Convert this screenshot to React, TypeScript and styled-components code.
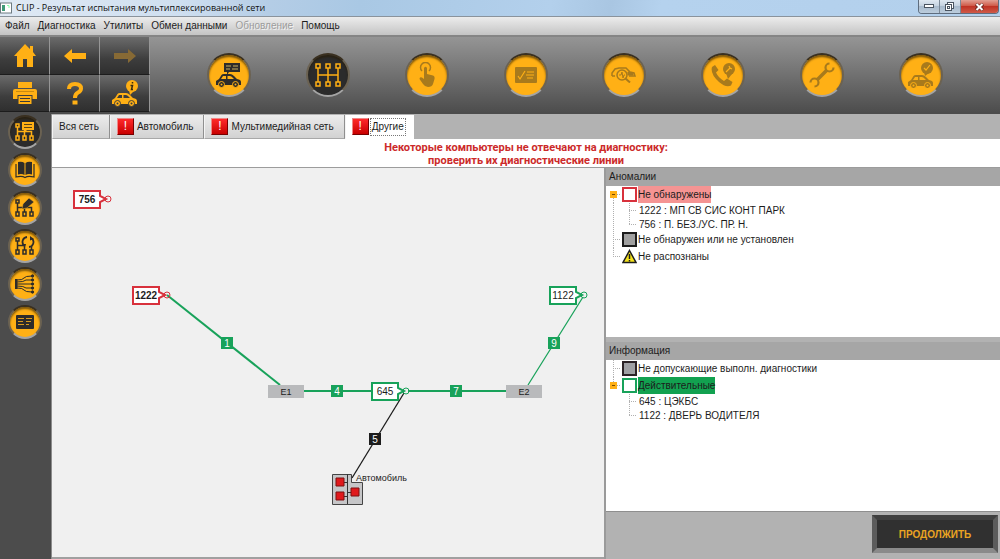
import React from 'react';
import styled, { createGlobalStyle } from 'styled-components';

const AMBER = '#ffb015';
const GREEN = '#18a25a';
const RED = '#d8313c';
const DARK = '#2e2c2a';

const GlobalStyle = createGlobalStyle`
  * { box-sizing: border-box; }
  body {
    margin: 0;
    font-family: 'Liberation Sans', Arial, sans-serif;
    font-size: 10px;
    color: #1c1c1c;
    background: #b2b2b2;
  }
  button {
    margin: 0;
    padding: 0;
    border: 0;
    background: none;
    font: inherit;
    color: inherit;
  }
  ul { list-style: none; margin: 0; padding: 0; }
  svg { display: block; }
`;

const Window = styled.div`
  display: flex;
  flex-direction: column;
  min-height: 100vh;
`;

/* ---------- title bar ---------- */

const TitleBar = styled.header`
  display: flex;
  align-items: center;
  height: 17px;
  border-bottom: 1px solid #8a939c;
  background: linear-gradient(100deg, #dfe9f4 0%, #cfdff0 18%, #b4cde6 27%, #a9c8e4 36%, #b3d0ec 55%, #a9c6e2 61%, #b5d2ee 66%, #b3d0ec 100%);
`;

const AppIcon = styled.svg`
  margin-right: 4px;
`;

const Title = styled.h1`
  flex: 1;
  margin: 0;
  font: 400 9px/16px 'Open Sans', 'Noto Sans', sans-serif;
  color: #111;
`;

const WindowControls = styled.div`
  display: flex;
  align-self: flex-start;
  height: 14px;
  margin-right: 1px;
  border: 1px solid #5e6d7e;
  border-top: 0;
  border-radius: 0 0 4px 4px;
  overflow: hidden;
`;

const WindowButton = styled.button<{ $close?: boolean }>`
  display: grid;
  place-items: center;
  width: ${(p) => (p.$close ? 37 : 21)}px;
  border-right: ${(p) => (p.$close ? '0' : '1px solid #7b8998')};
  background: ${(p) =>
    p.$close
      ? 'linear-gradient(#e2a093, #cf5a48 45%, #c03324 50%, #cf5a48)'
      : 'linear-gradient(#dfe8f1, #c4d2e0 45%, #a9bbcd 50%, #bccddd)'};
`;

/* ---------- menu ---------- */

const MenuBar = styled.nav`
  display: flex;
  align-items: center;
  gap: 8px;
  height: 20px;
  padding: 0 5px;
  border-bottom: 2px solid #858585;
  background: linear-gradient(#ececec, #c4c4c4);
`;

const MenuButton = styled.button`
  line-height: 16px;
  &:disabled { color: #9c9c9c; text-shadow: 1px 1px 0 #f2f2f2; }
`;

/* ---------- toolbar ---------- */

const Toolbar = styled.div`
  display: flex;
  height: 77px;
  border-bottom: 2px solid #4c4c4c;
  background: linear-gradient(#959595, #4d4d4d);
`;

const ToolGrid = styled.div`
  display: grid;
  grid-template-columns: repeat(3, 50px);
  grid-template-rows: 38px 37px;
`;

const ToolButton = styled.button`
  display: grid;
  place-items: center;
  border-right: 1px solid #969696;
  border-bottom: 1px solid #1c1c1c;
  background: linear-gradient(#6b6b6b, #3d3d3d 60%, #2f2f2f);
  color: ${AMBER};
  &:disabled { color: #876a35; }
`;

const StageList = styled.div`
  flex: 1;
  display: flex;
  justify-content: space-between;
  align-items: center;
  padding: 0 57px;
`;

const RoundButton = styled.button<{ $size: number; $active?: boolean }>`
  display: grid;
  place-items: center;
  flex: none;
  width: ${(p) => p.$size}px;
  height: ${(p) => p.$size}px;
  border-radius: 50%;
  border: 2px solid;
  border-color: #3a3020 #6b6252 #a4a4a4 #6b6252;
  background: ${(p) => (p.$active ? '#2b2b2b' : AMBER)};
  color: ${(p) => (p.$active ? AMBER : DARK)};
  box-shadow: inset 0 2px 2px rgba(40, 26, 0, 0.6);
  &:disabled { color: #a87a1c; }
`;

/* ---------- body ---------- */

const Body = styled.div`
  flex: 1;
  display: flex;
`;

const SideBar = styled.aside`
  flex: none;
  display: flex;
  flex-direction: column;
  align-items: center;
  gap: 4px;
  width: 52px;
  padding: 1px 2px 0 0;
  border-right: 1px solid #8c8c8c;
  background: #4c4c4c;
`;

const Main = styled.main`
  flex: 1;
  min-width: 0;
  display: flex;
  flex-direction: column;
`;

const TabList = styled.div`
  display: flex;
  height: 25px;
  padding-top: 1px;
  background: #b2b2b2;
`;

const Tab = styled.button<{ $selected?: boolean }>`
  display: flex;
  align-items: center;
  gap: ${(p) => (p.$selected ? 1 : 3)}px;
  padding: 0 ${(p) => (p.$selected ? 7 : 10)}px 0 6px;
  border-right: 1px solid #8f8f8f;
  border-left: 1px solid #f4f4f4;
  border-bottom: 1px solid ${(p) => (p.$selected ? '#fff' : '#a8a8a8')};
  background: ${(p) => (p.$selected ? '#fff' : 'linear-gradient(#ececec, #d2d2d2)')};
  ${(p) => p.$selected && 'border-right-color: #fff;'}
`;

const TabText = styled.span<{ $focused?: boolean }>`
  line-height: 16px;
  ${(p) => p.$focused && 'padding: 0 1px; border: 1px dotted #777;'}
`;

const AlertMark = styled.span`
  display: grid;
  place-items: center;
  width: 17px;
  height: 17px;
  border: 1px solid;
  border-color: #e88 #700 #700 #e88;
  background: linear-gradient(#ff2a2a, #c80000);
  color: #fff;
  font-size: 12px;
  line-height: 15px;
`;

const Warning = styled.p`
  margin: 0;
  padding: 2px 0 0;
  border-bottom: 1px solid #9c9c9c;
  background: #fff;
  color: #cc2a2a;
  font: 700 11px/13px Roboto, 'Liberation Sans', sans-serif;
  text-align: center;
`;

const Split = styled.div`
  flex: 1;
  display: grid;
  grid-template-columns: minmax(0, 552fr) minmax(0, 396fr);
`;

const Diagram = styled.section`
  background: #f0f0f0;
  border-bottom: 2px solid #a0a0a0;
  overflow: hidden;
`;

const SidePanel = styled.div`
  display: flex;
  flex-direction: column;
  border-left: 2px solid #9a9a9a;
`;

const Panel = styled.section`
  flex: 1;
  background: #fff;
  & + & { border-top: 5px solid #b2b2b2; }
`;

const PanelTitle = styled.h2`
  margin: 0;
  padding: 0 3px;
  background: #a6a6a6;
  font-size: 10px;
  font-weight: 400;
  line-height: 18px;
`;

const Row = styled.div<{ $leaf?: boolean }>`
  display: flex;
  align-items: center;
  height: ${(p) => (p.$leaf ? 14 : 17)}px;
`;

const RowText = styled.span<{ $fill?: string }>`
  margin-left: 1px;
  line-height: 17px;
  background: ${(p) => p.$fill ?? 'none'};
`;

const Swatch = styled.span<{ $edge: string; $fill: string }>`
  width: 15px;
  height: 15px;
  border: 2px solid ${(p) => p.$edge};
  background: ${(p) => p.$fill};
`;

const Footer = styled.footer`
  flex: none;
  display: flex;
  justify-content: flex-end;
  height: 48px;
  padding: 3px 2px 6px;
  border-top: 1px solid #8e8e8e;
  background: #b2b2b2;
`;

const ContinueButton = styled.button`
  width: 126px;
  height: 38px;
  border: 5px solid;
  border-color: #3f3f3f #5c5c5c #8a8a8a #5c5c5c;
  background: #303030;
  color: #eaa422;
  font-weight: 700;
`;

/* ---------- icons ---------- */

const HomeIcon = () => (
  <svg width="22" height="24" viewBox="0 0 22 24" fill="currentColor">
    <path d="M11 0 L16 5 V2 H19 V8 L22 12 H19 V23 H13 V15 H9 V23 H3 V12 H0 Z" />
  </svg>
);

const ArrowIcon = ({ right }: { right?: boolean }) => (
  <svg width="22" height="14" viewBox="0 0 22 14" fill="currentColor">
    <path d={right ? 'M22 7 L14 0 V4 H0 V10 H14 V14 Z' : 'M0 7 L8 0 V4 H22 V10 H8 V14 Z'} />
  </svg>
);

const PrinterIcon = () => (
  <svg width="24" height="22" viewBox="0 0 24 22" fill="currentColor">
    <path d="M5 0 H19 V6 H5 Z M2 7 H22 Q24 7 24 9 V17 H19.500 V13 H4.500 V17 H0 V9 Q0 7 2 7 Z M5.500 14 H18.500 V22 H5.500 Z" />
    <path d="M7 16.500 H17 M7 19.500 H17" stroke="#3a3a3a" fill="none" />
    <path d="M3 9.500 H21" stroke="#c98a10" fill="none" />
  </svg>
);

const HelpIcon = () => (
  <svg width="16" height="23" viewBox="0 0 16 23" fill="none" stroke="currentColor" strokeWidth="4">
    <path d="M2 7 Q2 2 8 2 Q14 2 14 6.500 Q14 9 11 10.500 Q8 12 8 16" />
    <path d="M8 18.500 V22.500" strokeWidth="5" />
  </svg>
);

const CarShape = ({ hole }: { hole: string }) => (
  <g>
    <path d="M0 11 V7 L3 5 L5.500 1 Q6 0 8 0 H14 Q16 0 18 2 L21 5 Q25 5.500 25 8 V11 Z" fill="currentColor" />
    <path d="M5 5 L7 2 H10 V5 Z M11.500 2 H14 Q15.500 2 18 5 H11.500 Z" fill={hole} />
    <circle cx="5.500" cy="10.500" r="3" fill="currentColor" stroke={hole} />
    <circle cx="19.500" cy="10.500" r="3" fill="currentColor" stroke={hole} />
    <circle cx="5.500" cy="10.500" r="1" fill={hole} />
    <circle cx="19.500" cy="10.500" r="1" fill={hole} />
  </g>
);

const CarInfoIcon = () => (
  <svg width="26" height="27" viewBox="0 0 26 27">
    <circle cx="20" cy="6" r="6" fill="currentColor" />
    <path d="M17 10 L18 15 L22 11 Z" fill="currentColor" />
    <path d="M20.500 2 V3.500 M18.500 5.500 H20.500 L19.500 9.500 H21" stroke="#3a2c10" strokeWidth="1.500" fill="none" />
    <g transform="translate(0 13)"><CarShape hole="#3d3d3d" /></g>
  </svg>
);

const CarReportIcon = () => (
  <svg width="26" height="26" viewBox="0 0 26 26">
    <path d="M8 1 H24 V10 H13 L11 13 V10 H8 Z" fill="currentColor" />
    <path d="M10 4 H15 M17 4 H22 M10 7 H14 M16 7 H22" stroke="#c9b060" fill="none" />
    <g transform="translate(0 12)"><CarShape hole={AMBER} /></g>
  </svg>
);

const NetworkIcon = () => (
  <svg width="26" height="24" viewBox="0 0 26 24" fill="none" stroke="currentColor" strokeWidth="1.500">
    <path d="M3 5 V19 M13 5 V19 M23 5 V19 M3 12 H23" />
    {[3, 13, 23].map((x) => (
      <g key={x} fill="#2b2b2b">
        <rect x={x - 2} y="1" width="4" height="4" />
        <rect x={x - 2} y="19" width="4" height="4" />
      </g>
    ))}
  </svg>
);

const TouchIcon = () => (
  <svg width="18" height="26" viewBox="0 0 18 26">
    <path d="M4 9 A5 5 0 1 1 11 9" fill="none" stroke="currentColor" strokeWidth="1.500" />
    <path d="M6 6 Q7.500 3.500 9 6 V12 L15 13.500 Q17 14 16.500 17 L15 22 Q14 25 10 25 Q7 25 5 22 L1.500 17 Q1.500 14.500 4 15.500 L6 17 Z" fill="currentColor" />
  </svg>
);

const ChecklistIcon = () => (
  <svg width="22" height="16" viewBox="0 0 22 16">
    <rect width="22" height="16" rx="1" fill="currentColor" />
    <path d="M3 9 L5 12 L10 4 M12 5 H19 M11 8 H19 M12 11 H18" fill="none" stroke={AMBER} strokeWidth="1.200" />
  </svg>
);

const CarSearchIcon = () => (
  <svg width="26" height="16" viewBox="0 0 26 16" fill="none" stroke="currentColor">
    <path d="M1 9 V6 L4 2 L8 1 H15 L19 5 L23 6 L24 9 H18 M1 9 H4" strokeWidth="1.500" />
    <path d="M17 5 L22 6 V8 H17 Z" fill="currentColor" />
    <circle cx="11" cy="8" r="5" fill={AMBER} strokeWidth="1.500" />
    <path d="M8 8 H10 L11 5 L12 11 L13 8 H14" />
    <path d="M14.500 11.500 L19 15.500" strokeWidth="2" />
  </svg>
);

const PhoneIcon = () => (
  <svg width="25" height="24" viewBox="0 0 25 24">
    <path d="M1 4 L4 2 L7.500 7 L5 9.500 Q7.500 15 13 18 L16 15.500 L21.500 19 L20 22.500 Q15 25 8 19 Q-1 11 1 4 Z" fill="currentColor" />
    <circle cx="18" cy="6" r="6" fill="currentColor" />
    <path d="M15 10 L17 16 L21 11 Z" fill="currentColor" />
    <path d="M15 9 L19 5 M18 3 L19 5 L21 6" stroke={AMBER} strokeWidth="1.200" fill="none" />
  </svg>
);

const WrenchIcon = () => (
  <svg width="26" height="26" viewBox="0 0 26 26" fill="none" stroke="currentColor">
    <path d="M8 18 L18 8" strokeWidth="3.500" />
    <path d="M20.500 1.500 A4 4 0 1 0 24.500 5.500" strokeWidth="2.200" />
    <path d="M1.500 20.500 A4 4 0 1 1 5.500 24.500" strokeWidth="2.200" />
  </svg>
);

const CarOkIcon = () => (
  <svg width="26" height="26" viewBox="0 0 26 26">
    <circle cx="19" cy="6" r="6" fill="currentColor" />
    <path d="M16 10 L17 14 L21 11 Z" fill="currentColor" />
    <path d="M16 6 L18 8 L22 3" stroke={AMBER} strokeWidth="1.200" fill="none" />
    <g transform="translate(0 13)"><CarShape hole={AMBER} /></g>
  </svg>
);

const TreeShape = () => (
  <g fill="none" stroke="currentColor" strokeWidth="1.500">
    <rect x="1" y="2" width="3" height="3" />
    <path d="M2.500 5 V14 M2.500 9.500 H16.500 V14 M9.500 6 V14" />
    <rect x="1" y="14" width="3" height="4" />
    <rect x="8" y="14" width="3" height="4" />
    <rect x="15" y="14" width="3" height="4" />
  </g>
);

const TreeNoteIcon = () => (
  <svg width="20" height="20" viewBox="0 0 20 20">
    <TreeShape />
    <path d="M7 0 H19 V8 H12 L9 11 V8 H7 Z" fill="currentColor" />
    <path d="M9 2.500 H17 M9 5.500 H17" stroke="#5b4415" />
  </svg>
);

const BookIcon = () => (
  <svg width="20" height="18" viewBox="0 0 20 18">
    <path d="M3 1 Q7 0 9.500 2 V14 Q7 12.500 3 13.500 Z M17 1 Q13 0 10.500 2 V14 Q13 12.500 17 13.500 Z" fill="currentColor" />
    <path d="M1 3 V16 Q7 14.500 10 16.500 Q13 14.500 19 16 V3" fill="none" stroke="currentColor" strokeWidth="1.200" />
  </svg>
);

const TreeEditIcon = () => (
  <svg width="20" height="20" viewBox="0 0 20 20">
    <TreeShape />
    <path d="M7 11 L8 6 L14 0 L19 4 L12 10 Z" fill="currentColor" stroke={AMBER} strokeWidth="0.500" />
  </svg>
);

const TreeRefreshIcon = () => (
  <svg width="20" height="20" viewBox="0 0 20 20">
    <TreeShape />
    <circle cx="13" cy="6" r="6" fill={AMBER} />
    <path d="M12 1 A5 5 0 0 0 9 9.500 M14 11 A5 5 0 0 0 17 2.500" fill="none" stroke="currentColor" strokeWidth="1.800" />
    <path d="M7 8 L11 8 L10 12 Z M15 0 L19 3 L15 4.500 Z" fill="currentColor" />
  </svg>
);

const HarnessIcon = () => (
  <svg width="20" height="20" viewBox="0 0 20 20" fill="none" stroke="currentColor">
    <path d="M1 5 V15" strokeWidth="3" />
    <path d="M2 6 Q8 6 9 4 Q10 2 17 2 M2 8 Q9 8 11 6 H17 M2 10 H17 M2 12 Q9 12 11 14 H17 M2 14 Q8 14 9 16 Q10 18 17 18" />
    {[2, 6, 10, 14, 18].map((y) => (
      <circle key={y} cx="17.500" cy={y} r="1.200" fill="currentColor" />
    ))}
  </svg>
);

const DocumentIcon = () => (
  <svg width="18" height="14" viewBox="0 0 18 14">
    <rect width="18" height="14" rx="1" fill="currentColor" />
    <path d="M2 3.500 H8 M10 3.500 H16 M2 6.500 H7 M10 6.500 H15 M2 9.500 H8 M10 9.500 H13" stroke="#d89a20" fill="none" />
  </svg>
);

/* ---------- tree ---------- */

type BranchKind = 'middle' | 'end' | 'line' | 'empty' | 'open';

const Branch = ({ kind, height, up = true, down = true }: { kind: BranchKind; height: number; up?: boolean; down?: boolean }) => {
  const mid = Math.floor(height / 2);
  const top = up ? 0 : mid;
  const bottom = kind === 'end' || !down ? mid : height;
  return (
    <svg width="16" height={height} stroke="#b0b0b0" strokeDasharray="1 1" fill="none">
      {kind !== 'empty' && <path d={`M7.500 ${top} V${bottom}`} />}
      {(kind === 'middle' || kind === 'end' || kind === 'open') && <path d={`M7 ${mid + 0.5} H14`} />}
      {kind === 'open' && (
        <g strokeDasharray="none">
          <rect x="4" y={mid - 3} width="7" height="7" fill={AMBER} stroke="none" />
          <path d={`M6 ${mid + 0.5} H9`} stroke="#7a4a00" />
        </g>
      )}
    </svg>
  );
};

const WarningSign = () => (
  <svg width="15" height="15" viewBox="0 0 15 15">
    <path d="M7.500 1.500 L14 13.500 H1 Z" fill="#f4e21c" stroke="#1c1c1c" strokeWidth="1.500" />
    <path d="M7.500 5 V10 M7.500 11 V12.500" stroke="#1c1c1c" strokeWidth="1.500" />
  </svg>
);

const Leaf = ({ text, trunk, last }: { text: string; trunk: boolean; last?: boolean }) => (
  <li>
    <Row $leaf>
      <Branch kind={trunk ? 'line' : 'empty'} height={14} />
      <Branch kind={last ? 'end' : 'middle'} height={14} />
      <RowText>{text}</RowText>
    </Row>
  </li>
);

/* ---------- network diagram ---------- */

const Unit = ({ x, y, color, label, bold }: { x: number; y: number; color: string; label: string; bold?: boolean }) => (
  <g transform={`translate(${x} ${y})`}>
    <path d="M1 1 H27 V6 L33 9 L27 12 V18 H1 Z" fill="#fff" stroke={color} strokeWidth="2" />
    <circle cx="35" cy="9" r="3" fill="none" stroke={color} />
    <text x="14" y="13" textAnchor="middle" fontSize="10" fontWeight={bold ? 700 : 400} fill="#1c1c1c">{label}</text>
  </g>
);

const WireTag = ({ x, y, color, label }: { x: number; y: number; color: string; label: string }) => (
  <g transform={`translate(${x} ${y})`}>
    <rect width="12" height="12" fill={color} />
    <text x="6" y="10" textAnchor="middle" fontSize="10" fill="#fff">{label}</text>
  </g>
);

const Splice = ({ x, y, label }: { x: number; y: number; label: string }) => (
  <g transform={`translate(${x} ${y})`}>
    <rect width="36" height="13" fill="#b9babc" />
    <text x="18" y="10" textAnchor="middle" fontSize="9" fill="#1c1c1c">{label}</text>
  </g>
);

const NetworkDiagram = () => (
  <svg width="552" height="388" viewBox="0 0 552 388">
    <g stroke={GREEN} fill="none" strokeWidth="2">
      <path d="M115 127 L228 217" />
      <path d="M252 223 H320 M356 223 H454" />
      <path d="M531 129 L476 217" strokeWidth="1.300" />
    </g>
    <path d="M352 225 L300 310" stroke="#1c1c1c" strokeWidth="1.300" />
    <Unit x={21} y={22} color={RED} label="756" bold />
    <Unit x={80} y={118} color={RED} label="1222" bold />
    <Unit x={319} y={214} color={GREEN} label="645" />
    <Unit x={497} y={118} color={GREEN} label="1122" />
    <Splice x={216} y={217} label="E1" />
    <Splice x={454} y={217} label="E2" />
    <WireTag x={169} y={169} color={GREEN} label="1" />
    <WireTag x={279} y={217} color={GREEN} label="4" />
    <WireTag x={398} y={217} color={GREEN} label="7" />
    <WireTag x={496} y={169} color={GREEN} label="9" />
    <WireTag x={317} y={265} color="#1c1c1c" label="5" />
    <g transform="translate(280 305)">
      <path d="M0.500 1.500 H19.500 V9.500 H30.500 V31.500 H0.500 Z" fill="#c6c6c8" stroke="#444" />
      <path d="M15.500 1 V31 M12 9.500 H15 M12 23.500 H15 M15 19.500 H19" stroke="#333" />
      <path d="M4 5 H12 V13 H4 Z M4 19 H12 V27 H4 Z M19 15 H27 V23 H19 Z" fill="#e0191c" stroke="#7c1010" strokeWidth="1" />
    </g>
    <text x="304" y="313" fontSize="9" fill="#1c1c1c">Автомобиль</text>
  </svg>
);

/* ---------- data ---------- */

const menus = ['Файл', 'Диагностика', 'Утилиты', 'Обмен данными', 'Обновление', 'Помощь'];

const tools = [
  { name: 'Главная', icon: <HomeIcon /> },
  { name: 'Назад', icon: <ArrowIcon /> },
  { name: 'Вперёд', icon: <ArrowIcon right />, disabled: true },
  { name: 'Печать', icon: <PrinterIcon /> },
  { name: 'Справка', icon: <HelpIcon /> },
  { name: 'Данные автомобиля', icon: <CarInfoIcon /> },
];

const stages = [
  { name: 'Идентификация', icon: <CarReportIcon />, state: 'ready' },
  { name: 'Тест сети', icon: <NetworkIcon />, state: 'active' },
  { name: 'Выбор', icon: <TouchIcon />, state: 'off' },
  { name: 'Проверки', icon: <ChecklistIcon />, state: 'off' },
  { name: 'Поиск неисправности', icon: <CarSearchIcon />, state: 'off' },
  { name: 'Техническая помощь', icon: <PhoneIcon />, state: 'off' },
  { name: 'Ремонт', icon: <WrenchIcon />, state: 'off' },
  { name: 'Завершение', icon: <CarOkIcon />, state: 'off' },
];

const sideActions = [
  { name: 'Результат', icon: <TreeNoteIcon /> },
  { name: 'Документация', icon: <BookIcon /> },
  { name: 'Изменить сеть', icon: <TreeEditIcon /> },
  { name: 'Повторить тест', icon: <TreeRefreshIcon /> },
  { name: 'Проводка', icon: <HarnessIcon /> },
  { name: 'Отчёт', icon: <DocumentIcon /> },
];

const tabs = [
  { text: 'Вся сеть', alert: false },
  { text: 'Автомобиль', alert: true },
  { text: 'Мультимедийная сеть', alert: true },
  { text: 'Другие', alert: true },
];

export default function App() {
  return (
    <>
      <GlobalStyle />
      <Window>
        <TitleBar>
          <AppIcon width="12" height="12" viewBox="0 0 12 12">
            <rect x="0.500" y="1" width="11" height="10" fill="#fff" stroke="#6d7a80" />
            <path d="M2 3 H5 V9 H2 Z" fill="#3f9a78" />
            <path d="M7 3.500 H9 V6" stroke="#8fa" fill="none" />
          </AppIcon>
          <Title>CLIP - Результат испытания мультиплексированной сети</Title>
          <WindowControls>
            <WindowButton aria-label="Свернуть">
              <svg width="10" height="5"><rect x="0.500" y="0.500" width="9" height="3" fill="#fff" stroke="#4a5460" /></svg>
            </WindowButton>
            <WindowButton aria-label="Развернуть">
              <svg width="10" height="9" fill="#fff" stroke="#4a5460">
                <rect x="2.500" y="0.500" width="6" height="6" />
                <rect x="0.500" y="2.500" width="6" height="6" />
                <rect x="2.500" y="4.500" width="2" height="2" />
              </svg>
            </WindowButton>
            <WindowButton $close aria-label="Закрыть">
              <svg width="9" height="8" fill="none">
                <path d="M1 1 L8 7 M8 1 L1 7" stroke="#6b2a22" strokeWidth="3.500" />
                <path d="M1.500 1 L7.500 7 M7.500 1 L1.500 7" stroke="#fff" strokeWidth="2" />
              </svg>
            </WindowButton>
          </WindowControls>
        </TitleBar>

        <MenuBar>
          {menus.map((m) => (
            <MenuButton key={m} disabled={m === 'Обновление'}>{m}</MenuButton>
          ))}
        </MenuBar>

        <Toolbar>
          <ToolGrid>
            {tools.map((t) => (
              <ToolButton key={t.name} aria-label={t.name} disabled={t.disabled}>{t.icon}</ToolButton>
            ))}
          </ToolGrid>
          <StageList>
            {stages.map((s) => (
              <RoundButton key={s.name} $size={44} $active={s.state === 'active'} disabled={s.state === 'off'} aria-label={s.name}>
                {s.icon}
              </RoundButton>
            ))}
          </StageList>
        </Toolbar>

        <Body>
          <SideBar>
            {sideActions.map((a, i) => (
              <RoundButton key={a.name} $size={34} $active={i === 0} aria-label={a.name}>{a.icon}</RoundButton>
            ))}
          </SideBar>

          <Main>
            <TabList role="tablist">
              {tabs.map((t, i) => (
                <Tab key={t.text} role="tab" aria-selected={i === 3} $selected={i === 3}>
                  {t.alert && <AlertMark>!</AlertMark>}
                  <TabText $focused={i === 3}>{t.text}</TabText>
                </Tab>
              ))}
            </TabList>

            <Warning role="alert">
              Некоторые компьютеры не отвечают на диагностику:
              <br />
              проверить их диагностические линии
            </Warning>

            <Split>
              <Diagram aria-label="Схема сети">
                <NetworkDiagram />
              </Diagram>

              <SidePanel>
                <Panel>
                  <PanelTitle>Аномалии</PanelTitle>
                  <ul>
                    <li>
                      <Row>
                        <Branch kind="open" height={17} up={false} />
                        <Swatch $edge={RED} $fill="#fff" />
                        <RowText $fill="#f59493">Не обнаружены</RowText>
                      </Row>
                      <ul>
                        <Leaf text="1222 : МП СВ СИС КОНТ ПАРК" trunk />
                        <Leaf text="756 : П. БЕЗ./УС. ПР. Н." trunk last />
                      </ul>
                    </li>
                    <li>
                      <Row>
                        <Branch kind="middle" height={17} />
                        <Swatch $edge="#1c1c1c" $fill="#a0a0a0" />
                        <RowText>Не обнаружен или не установлен</RowText>
                      </Row>
                    </li>
                    <li>
                      <Row>
                        <Branch kind="end" height={17} />
                        <WarningSign />
                        <RowText>Не распознаны</RowText>
                      </Row>
                    </li>
                  </ul>
                </Panel>

                <Panel>
                  <PanelTitle>Информация</PanelTitle>
                  <ul>
                    <li>
                      <Row>
                        <Branch kind="middle" height={17} />
                        <Swatch $edge="#2c2226" $fill="#a0a0a4" />
                        <RowText>Не допускающие выполн. диагностики</RowText>
                      </Row>
                    </li>
                    <li>
                      <Row>
                        <Branch kind="open" height={17} down={false} />
                        <Swatch $edge={GREEN} $fill="#fff" />
                        <RowText $fill="#12a150">Действительные</RowText>
                      </Row>
                      <ul>
                        <Leaf text="645 : ЦЭКБС" trunk={false} />
                        <Leaf text="1122 : ДВЕРЬ ВОДИТЕЛЯ" trunk={false} last />
                      </ul>
                    </li>
                  </ul>
                </Panel>

                <Footer>
                  <ContinueButton>ПРОДОЛЖИТЬ</ContinueButton>
                </Footer>
              </SidePanel>
            </Split>
          </Main>
        </Body>
      </Window>
    </>
  );
}
